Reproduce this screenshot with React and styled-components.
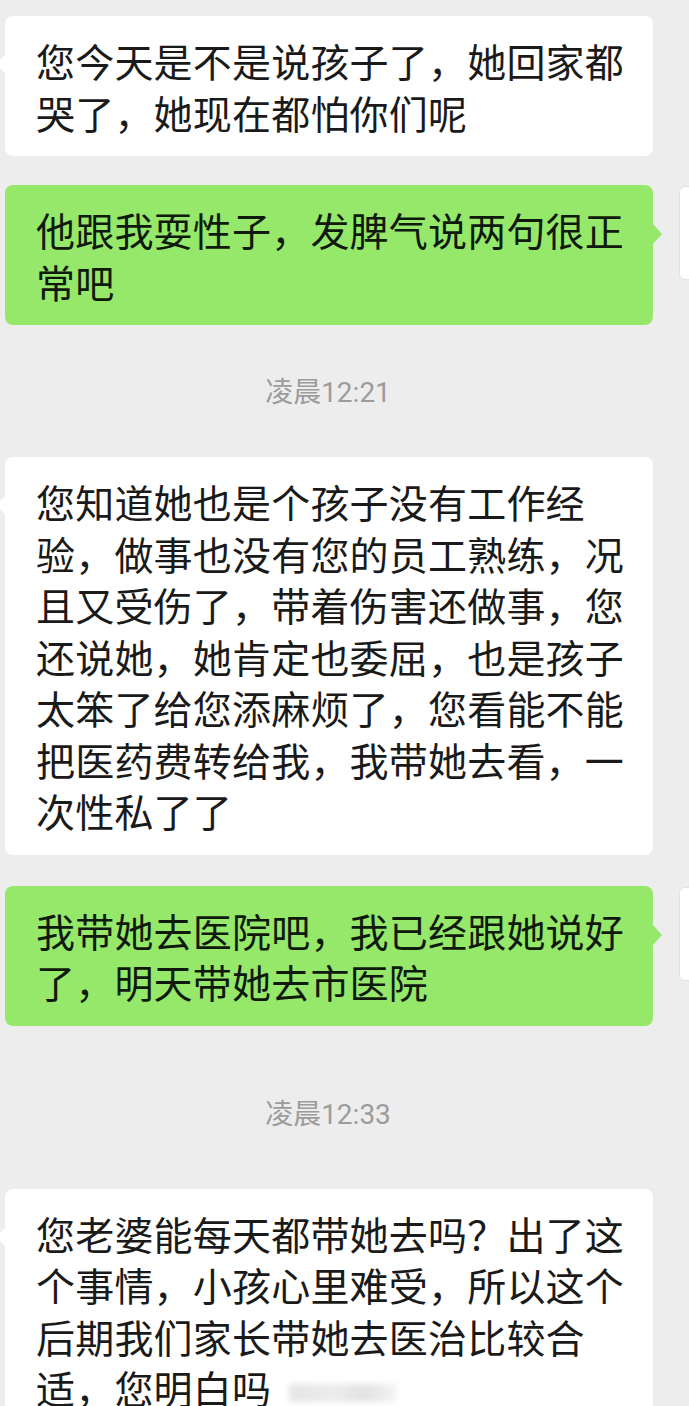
import React from "react";
import styled, { createGlobalStyle, css } from "styled-components";

const GlobalStyle = createGlobalStyle`
  html, body {
    margin: 0;
    padding: 0;
    background: #ededed;
  }
  #root {
    width: 689px;
    height: 1406px;
    overflow: hidden;
  }
`;

const Chat = styled.div`
  display: flex;
  flex-direction: column;
  padding-top: 16px;
  font-family: "Noto Sans CJK SC", "Noto Sans", sans-serif;
`;

const Row = styled.div`
  display: flex;
  align-items: flex-start;
  padding-left: 5px;
  margin-top: ${(p) => p.$top || 0}px;
`;

const Bubble = styled.div`
  position: relative;
  box-sizing: border-box;
  width: 648px;
  flex-shrink: 0;
  padding: 19px 20px 18px 31px;
  border-radius: 8px;
  font-size: 39px;
  line-height: 51.5px;
  letter-spacing: 0.2px;
  color: #1a1a1a;
  background: #ffffff;

  &::before {
    content: "";
    position: absolute;
    top: 38px;
    left: -9px;
    border-style: solid;
    border-width: 10px 10px 10px 0;
    border-color: transparent #ffffff transparent transparent;
  }

  ${(p) =>
    p.$mine &&
    css`
      background: #95e86a;
      color: #0f1a0c;

      &::before {
        left: auto;
        right: -9px;
        border-width: 11px 0 11px 10px;
        border-color: transparent transparent transparent #95e86a;
      }
    `}
`;

const Line = styled.div`
  white-space: nowrap;
`;

const Avatar = styled.div`
  flex-shrink: 0;
  width: 92px;
  height: 92px;
  margin-left: 26px;
  margin-top: 1px;
  border-radius: 6px;
  background: #ffffff;
  border: 1px solid #e2e2e2;
`;

const Stamp = styled.div`
  align-self: center;
  margin: ${(p) => p.$top}px 0 ${(p) => p.$bottom}px;
  padding-right: 33px;
  font-family: Roboto, "Noto Sans CJK SC", sans-serif;
  font-size: 28px;
  line-height: 30px;
  color: #9c9c9c;
`;

const Smudge = styled.span`
  display: inline-block;
  width: 108px;
  height: 18px;
  margin-left: 18px;
  vertical-align: middle;
  background: linear-gradient(90deg, #e4e4e4, #ececec 40%, #e2e2e2 70%, #f4f4f4);
  filter: blur(3px);
`;

const Message = ({ lines, mine, top, tail }) => (
  <Row $top={top}>
    <Bubble $mine={mine}>
      {lines.map((l, i) => (
        <Line key={i}>
          {l}
          {tail && i === lines.length - 1 && <Smudge />}
        </Line>
      ))}
    </Bubble>
    {mine && <Avatar />}
  </Row>
);

export default function App() {
  return (
    <>
      <GlobalStyle />
      <Chat>
        <Message lines={["您今天是不是说孩子了，她回家都", "哭了，她现在都怕你们呢"]} />
        <Message mine top={29} lines={["他跟我耍性子，发脾气说两句很正", "常吧"]} />
        <Stamp $top={53} $bottom={49}>凌晨12:21</Stamp>
        <Message
          lines={[
            "您知道她也是个孩子没有工作经",
            "验，做事也没有您的员工熟练，况",
            "且又受伤了，带着伤害还做事，您",
            "还说她，她肯定也委屈，也是孩子",
            "太笨了给您添麻烦了，您看能不能",
            "把医药费转给我，我带她去看，一",
            "次性私了了",
          ]}
        />
        <Message mine top={31} lines={["我带她去医院吧，我已经跟她说好", "了，明天带她去市医院"]} />
        <Stamp $top={74} $bottom={59}>凌晨12:33</Stamp>
        <Message
          tail
          lines={[
            "您老婆能每天都带她去吗？出了这",
            "个事情，小孩心里难受，所以这个",
            "后期我们家长带她去医治比较合",
            "适，您明白吗",
          ]}
        />
      </Chat>
    </>
  );
}
